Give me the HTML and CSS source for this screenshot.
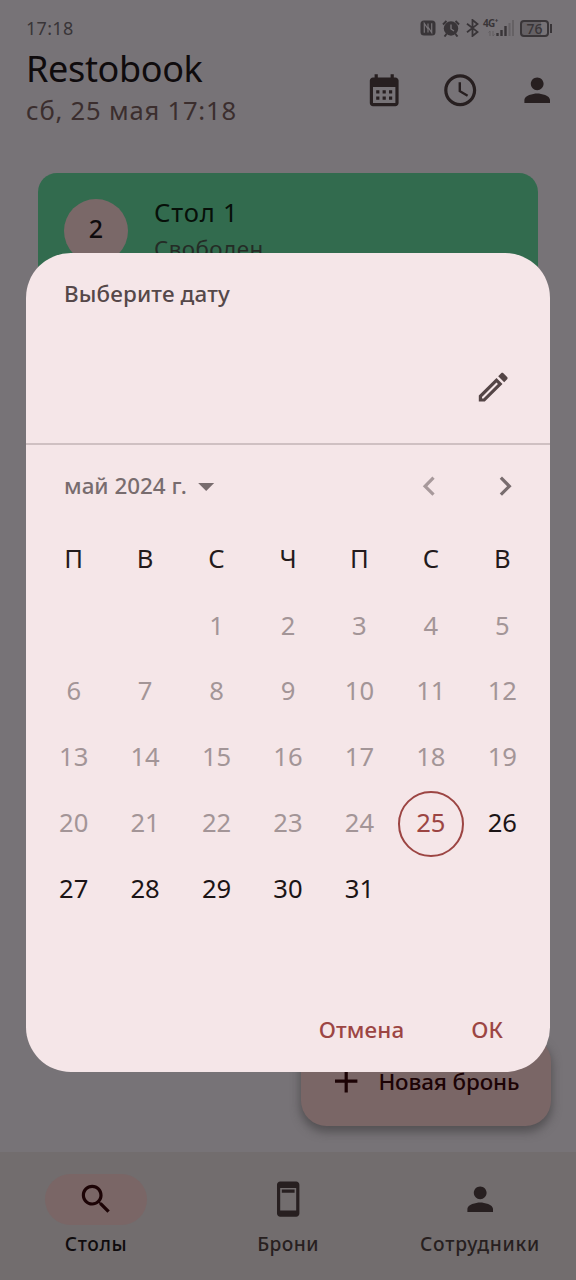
FILE: index.html
```html
<!DOCTYPE html>
<html lang="ru">
<head>
<meta charset="utf-8">
<title>Restobook</title>
<link rel="stylesheet" href="styles.css">
</head>
<body>
<div class="app">
  <div class="status">
    <span class="status-time">17:18</span>
    <div class="status-icons">
      <svg width="16" height="16" viewBox="0 0 16 16"><rect x=".5" y=".5" width="15" height="15" rx="3.500" fill="#393538"/><path d="M4.300 12.800V3.500L8 9v3.500M8 3.500V7l3.700 5.500V3.200" fill="none" stroke="#777377" stroke-width="1.200"/></svg>
      <svg width="18" height="17" viewBox="0 0 18 17"><circle cx="9" cy="8.500" r="7.200" fill="#393538"/><path d="M1 4.500L4.500 1M17 4.500L13.500 1M4.500 14L2.500 16.500M13.500 14l2 2.500" stroke="#393538" stroke-width="2"/><path d="M9 4.500v4.500l3 2" fill="none" stroke="#777377" stroke-width="1.400"/></svg>
      <svg width="13" height="18" viewBox="0 0 13 18"><path d="M1 4.800l10.500 8.100L6.500 17V1l5 4.100L1 13.200" fill="none" stroke="#393538" stroke-width="1.800"/></svg>
      <div class="signal">
        <span class="net">4G⁺</span>
        <svg width="30" height="18" viewBox="0 0 30 18"><path d="M6 12v5M4.500 13.500L6 12M9 12v5l1.500-1.500" fill="none" stroke="#625e61"/><path d="M13.500 14v3M17.500 11v6M21.500 7v10" stroke="#393538" stroke-width="2.400"/><path d="M25.500 4v13M29 1v16" stroke="#656164" stroke-width="2"/></svg>
      </div>
      <div class="battery"><span>76</span></div>
    </div>
  </div>

  <header class="header">
    <div>
      <h1 class="title">Restobook</h1>
      <p class="subtitle">сб, 25 мая 17:18</p>
    </div>
    <div class="header-icons">
      <svg class="icon" viewBox="0 0 24 24"><path d="M19 4h-1V2h-2v2H8V2H6v2H5c-1.110 0-1.990.9-1.990 2L3 20c0 1.100.890 2 2 2h14c1.100 0 2-.9 2-2V6c0-1.100-.9-2-2-2zm0 16H5V10h14v10zM9 14H7v-2h2v2zm4 0h-2v-2h2v2zm4 0h-2v-2h2v2zm-8 4H7v-2h2v2zm4 0h-2v-2h2v2zm4 0h-2v-2h2v2z"/></svg>
      <svg class="icon" viewBox="0 0 24 24"><path d="M11.990 2C6.470 2 2 6.480 2 12s4.470 10 9.990 10C17.520 22 22 17.520 22 12S17.520 2 11.990 2zM12 20c-4.420 0-8-3.580-8-8s3.580-8 8-8 8 3.580 8 8-3.580 8-8 8zm.5-13H11v6l5.250 3.150.75-1.230-4.500-2.670z"/></svg>
      <svg class="icon" viewBox="0 0 24 24"><path d="M12 12c2.210 0 4-1.790 4-4s-1.790-4-4-4-4 1.790-4 4 1.790 4 4 4zm0 2c-2.670 0-8 1.340-8 4v2h16v-2c0-2.660-5.330-4-8-4z"/></svg>
    </div>
  </header>

  <main class="content">
    <div class="card">
      <div class="avatar">2</div>
      <div>
        <div class="card-title">Стол 1</div>
        <div class="card-sub">Свободен</div>
      </div>
    </div>
    <button class="fab">
      <svg class="icon" viewBox="0 0 24 24"><path d="M19 13h-6v6h-2v-6H5v-2h6V5h2v6h6v2z"/></svg>
      <span class="fab-label">Новая бронь</span>
    </button>
  </main>

  <nav class="nav">
    <div class="nav-item active">
      <div class="pill"><svg class="icon" viewBox="0 0 24 24"><path d="M15.500 14h-.790l-.280-.270C15.410 12.590 16 11.110 16 9.500 16 5.910 13.090 3 9.500 3S3 5.910 3 9.500 5.910 16 9.500 16c1.610 0 3.090-.590 4.230-1.570l.270.280v.790l5 4.990L20.490 19l-4.990-5zm-6 0C7.010 14 5 11.990 5 9.500S7.010 5 9.500 5 14 7.010 14 9.500 11.990 14 9.500 14z"/></svg></div>
      <span>Столы</span>
    </div>
    <div class="nav-item">
      <div class="pill"><svg class="icon" viewBox="0 0 24 24"><path fill-rule="evenodd" d="M17 1H7c-1.100 0-2 .9-2 2v18c0 1.100.9 2 2 2h10c1.100 0 2-.9 2-2V3c0-1.100-.9-2-2-2zm0 18H7V5h10v14zM8 6h8v2H8z"/></svg></div>
      <span>Брони</span>
    </div>
    <div class="nav-item">
      <div class="pill"><svg class="icon" viewBox="0 0 24 24"><path d="M12 12c2.210 0 4-1.790 4-4s-1.790-4-4-4-4 1.790-4 4 1.790 4 4 4zm0 2c-2.670 0-8 1.340-8 4v2h16v-2c0-2.660-5.330-4-8-4z"/></svg></div>
      <span class="wide">Сотрудники</span>
    </div>
  </nav>

  <section class="dialog">
    <div class="dialog-head">
      <div class="dialog-title">Выберите дату</div>
      <svg class="icon edit" viewBox="0 0 24 24"><path d="M14.060 9.020l.920.920L5.920 19H5v-.920l9.060-9.060M17.660 3c-.250 0-.510.100-.7.290l-1.830 1.830 3.750 3.750 1.830-1.830c.390-.390.390-1.020 0-1.410l-2.340-2.340c-.2-.2-.450-.290-.710-.290zm-3.600 3.190L3 17.250V21h3.750L17.810 9.940l-3.750-3.750z"/></svg>
    </div>
    <div class="month-row">
      <span class="month">май 2024 г.</span>
      <svg class="icon" viewBox="0 0 24 24"><path d="M7 10l5 5 5-5z"/></svg>
      <div class="arrows">
        <svg class="icon off" viewBox="0 0 24 24"><path d="M15.410 7.410L14 6l-6 6 6 6 1.410-1.410L10.830 12z"/></svg>
        <svg class="icon" viewBox="0 0 24 24"><path d="M10 6L8.590 7.410 13.170 12l-4.580 4.590L10 18l6-6z"/></svg>
      </div>
    </div>
    <div class="grid">
      <b>П</b><b>В</b><b>С</b><b>Ч</b><b>П</b><b>С</b><b>В</b>
      <i></i><i></i><i>1</i><i>2</i><i>3</i><i>4</i><i>5</i>
      <i>6</i><i>7</i><i>8</i><i>9</i><i>10</i><i>11</i><i>12</i>
      <i>13</i><i>14</i><i>15</i><i>16</i><i>17</i><i>18</i><i>19</i>
      <i>20</i><i>21</i><i>22</i><i>23</i><i>24</i><i class="today"><span>25</span></i><i class="on">26</i>
      <i class="on">27</i><i class="on">28</i><i class="on">29</i><i class="on">30</i><i class="on">31</i>
    </div>
    <div class="actions"><span>Отмена</span><span>ОК</span></div>
  </section>
</div>
</body>
</html>
```
FILE: styles.css
```css
* { box-sizing: border-box; margin: 0; padding: 0; }
body { font-family: "Noto Sans", sans-serif; background: #777377; color: #0f0b0d; }
.app { position: relative; width: 576px; height: 1280px; display: flex; flex-direction: column; overflow: hidden; white-space: nowrap; }
.icon { display: block; width: 38.4px; height: 38.4px; fill: #271f20; flex: none; }

.status { height: 48px; padding: 8px 24px 0 26px; display: flex; justify-content: space-between; align-items: center; color: #393538; }
.status-time { font-size: 18px; letter-spacing: 0.3px; }
.status-icons { display: flex; align-items: center; gap: 6px; }
.signal { position: relative; height: 18px; width: 30px; margin-left: -1px; }
.signal svg { display: block; }
.net { position: absolute; left: -1px; top: -1px; font: 700 10px/10px "Noto Sans", sans-serif; letter-spacing: -0.6px; }
.battery { position: relative; width: 29px; height: 17px; margin-right: 3px; border: 2px solid #393538; border-radius: 4px; background: linear-gradient(90deg, #656165 74%, transparent 74%); font-size: 14px; font-weight: 500; line-height: 13px; text-align: center; }
.battery::after { content: ""; position: absolute; right: -5px; top: 2px; width: 2px; height: 9px; background: #393538; }

.header { height: 125px; padding: 1px 19.500px 0 26px; display: flex; justify-content: space-between; }
.title { font-size: 36px; font-weight: 400; line-height: 40px; letter-spacing: -0.35px; }
.subtitle { font-size: 25.6px; line-height: 43px; letter-spacing: 0.8px; color: #3b2e2e; }
.header-icons { display: flex; gap: 38.4px; padding-top: 21.500px; }

.content { flex: 1; position: relative; padding: 0 38px; }
.card { height: 116px; padding: 26px; border-radius: 19px; background: #326b4e; display: flex; gap: 26px; }
.avatar { width: 64px; height: 64px; border-radius: 50%; background: #7a6868; display: grid; place-items: center; font-size: 25px; font-weight: 500; line-height: 58px; padding-bottom: 6px; }
.card-title { font-size: 25.6px; line-height: 28px; letter-spacing: 0.8px; color: #071009; }
.card-sub { font-size: 22.4px; line-height: 43px; letter-spacing: 0.4px; color: #242c26; }
.fab { position: absolute; right: 25px; bottom: 26px; width: 250px; height: 90px; border: 0; border-radius: 25.6px; background: #7a6666; box-shadow: 0 5px 10px 1px rgba(60, 58, 60, .6); display: flex; align-items: center; gap: 13px; padding-left: 26px; font: 500 22.4px "Noto Sans", sans-serif; letter-spacing: -0.1px; color: #1c0305; }
.fab .icon { fill: #1c0305; }

.nav { height: 128px; padding-top: 22px; background: #726d6e; display: flex; }
.nav-item { flex: 1; display: flex; flex-direction: column; align-items: center; font-size: 19.2px; font-weight: 500; line-height: 38px; letter-spacing: 0.4px; color: #271f20; }
.nav-item .wide { letter-spacing: 0.8px; }
.pill { width: 102.4px; height: 51.2px; border-radius: 26px; display: grid; place-items: center; }
.active .pill { background: #7a6666; }
.active { color: #0f0b0d; letter-spacing: 0.6px; }
.active .icon { fill: #1c0305; }

.dialog { position: absolute; left: 26px; top: 253px; width: 524px; height: 819px; border-radius: 44.8px; background: #f5e6e8; display: flex; flex-direction: column; }
.dialog-head { height: 192px; border-bottom: 2px solid #cfc0c2; padding: 26px 38px 0; }
.dialog-title { font-size: 22.4px; font-weight: 500; line-height: 30px; letter-spacing: 0.15px; color: #554849; }
.edit { margin: 59px 0 0 auto; }
.dialog .edit { fill: #544546; }
.month-row { height: 82px; padding: 0 5.500px 0 38px; display: flex; align-items: center; color: #786c6e; }
.month { font-size: 22.4px; font-weight: 500; width: 123px; padding-bottom: 2px; }
.month-row .icon { fill: #786c6e; }
.month-row .off { fill: #a7999b; }
.arrows { display: flex; gap: 38px; margin-left: auto; padding-right: 20px; }
.grid { display: grid; grid-template-columns: repeat(7, 1fr); grid-auto-rows: 65.8px; margin: 1px 12px 0; }
.grid b, .grid i { display: grid; place-items: center; font-size: 25.6px; font-weight: 400; font-style: normal; padding-bottom: 4px; }
.grid b { color: #231a1b; }
.grid i { color: #a39597; padding-bottom: 3px; }
.grid .on { color: #1b1415; }
.grid .today { padding: 0; color: #9c4543; }
.today span { width: 66px; height: 66px; border: 2px solid #9c4543; border-radius: 50%; line-height: 59px; text-align: center; }
.actions { margin-top: auto; height: 84px; padding: 0 47px; display: flex; justify-content: flex-end; gap: 67px; font-size: 22.4px; font-weight: 500; line-height: 83px; letter-spacing: 0.1px; color: #9c4543; }
```
